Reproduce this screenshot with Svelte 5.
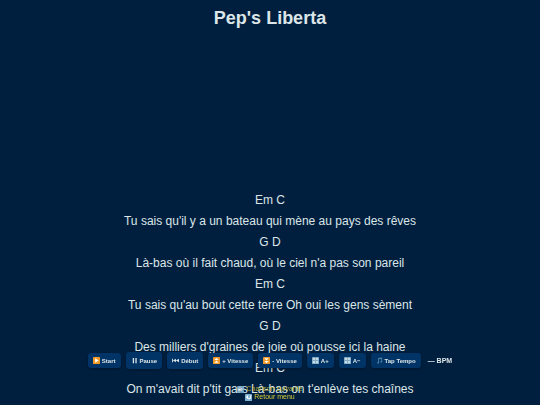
<script>
  const title = "Pep's Liberta";

  const lines = [
    'Em C',
    "Tu sais qu'il y a un bateau qui mène au pays des rêves",
    'G D',
    "Là-bas où il fait chaud, où le ciel n'a pas son pareil",
    'Em C',
    "Tu sais qu'au bout cette terre Oh oui les gens sèment",
    'G D',
    "Des milliers d'graines de joie où pousse ici la haine",
    'Em C',
    "On m'avait dit p'tit gars Là-bas on t'enlève tes chaînes"
  ];

  let bpm = '—';
  let fontSize = 12;
  let speed = 1;
  let playing = false;
  let taps = [];
  let lyrics;

  const controls = [
    { icon: 'play', label: 'Start', action: () => (playing = true) },
    { icon: 'pause', label: 'Pause', tall: true, action: () => (playing = false) },
    { icon: 'rewind', label: 'Début', tall: true, action: () => lyrics.scrollTo(0, 0) },
    { icon: 'up', label: '+ Vitesse', action: () => (speed += 1) },
    { icon: 'down', label: '- Vitesse', action: () => (speed = Math.max(1, speed - 1)) },
    { icon: 'letters', label: 'A+', action: () => (fontSize += 1) },
    { icon: 'letters', label: 'A−', action: () => (fontSize -= 1) },
    { icon: 'note', label: 'Tap Tempo', action: tapTempo }
  ];

  function tapTempo() {
    taps = [...taps, Date.now()].slice(-5);
    if (taps.length > 1) {
      const average = (taps[taps.length - 1] - taps[0]) / (taps.length - 1);
      bpm = Math.round(60000 / average);
    }
  }
</script>

{#snippet icon(name)}
  <svg class="icon" viewBox="0 0 16 16" aria-hidden="true">
    {#if name === 'play'}
      <rect width="16" height="16" rx="2" fill="#f39a26" />
      <path d="M5 3l8 5-8 5z" fill="#fff" />
    {:else if name === 'up'}
      <rect width="16" height="16" rx="2" fill="#f39a26" />
      <path d="M8 2l5 5H3zM8 8l5 5H3z" fill="#fff" />
    {:else if name === 'down'}
      <rect width="16" height="16" rx="2" fill="#f39a26" />
      <path d="M3 3h10L8 8zM3 9h10l-5 5z" fill="#fff" />
    {:else if name === 'pause'}
      <path d="M4 2h3v12H4zM10 2h3v12h-3z" fill="#dce6e8" />
    {:else if name === 'rewind'}
      <path d="M0 4h2v8H0zM9 4v8L2 8zM16 4v8L9 8z" fill="#dce6e8" />
    {:else if name === 'letters'}
      <rect width="16" height="16" rx="1" fill="#7fa9c3" />
      <path d="M2 2h5v5H2zM9 2h5v5H9zM2 9h5v5H2zM9 9h5v5H9z" fill="#c5dae4" />
    {:else if name === 'note'}
      <path d="M5 2l9-1v10a2 2 0 1 1-2-2V4L7 5v8a2 2 0 1 1-2-2z" fill="#4d87aa" />
    {:else if name === 'next'}
      <rect width="16" height="16" rx="1" fill="#7fb2d2" />
      <path d="M2 6h6V3l6 5-6 5v-3H2z" fill="#fff" />
    {:else if name === 'back'}
      <rect width="16" height="16" rx="1" fill="#7fb2d2" />
      <path d="M7 5V2L2 7l5 5V9h3a2 2 0 0 0 2-2V3h2v5a4 4 0 0 1-4 4H8" fill="#fff" />
    {/if}
  </svg>
{/snippet}

<main>
  <h1>{title}</h1>

  <div class="lyrics" bind:this={lyrics} style="font-size: {fontSize}px">
    {#each lines as line}
      <p>{line}</p>
    {/each}
  </div>

  <div class="controls">
    {#each controls as control}
      <button type="button" class:tall={control.tall} on:click={control.action}>
        {@render icon(control.icon)}
        {control.label}
      </button>
    {/each}
    <span class="bpm">{bpm} BPM</span>
  </div>

  <nav>
    <a class="next" href="#suivante">{@render icon('next')} Chanson suivante</a>
    <a href="#menu">{@render icon('back')} Retour menu</a>
  </nav>
</main>

<style>
  :global(body) {
    margin: 0;
    background: #001f3f;
    color: #dce6e8;
    font-family: 'Liberation Sans', Arial, sans-serif;
    overflow: hidden;
  }

  main {
    display: flex;
    flex-direction: column;
    height: 100vh;
    text-align: center;
  }

  h1 {
    margin: 0;
    padding-top: 8px;
    font-size: 18px;
    line-height: 21px;
  }

  .lyrics {
    flex: 1;
    padding-top: 164px;
    overflow: hidden;
  }

  p {
    margin: 0 0 7px;
    line-height: 14px;
  }

  .controls {
    position: fixed;
    right: 0;
    bottom: 36px;
    left: 0;
    display: flex;
    align-items: center;
    justify-content: center;
    gap: 5px;
  }

  button {
    display: flex;
    align-items: center;
    gap: 2px;
    height: 15px;
    padding: 0 5px;
    border: none;
    border-radius: 3px;
    background: #003366;
    box-shadow: 0 1px 3px rgba(0, 0, 0, 0.3);
    color: inherit;
    font: bold 6px 'Liberation Sans', Arial, sans-serif;
    white-space: nowrap;
    cursor: pointer;
  }

  button.tall {
    height: 17px;
  }

  .icon {
    flex: none;
    width: 7px;
    height: 7px;
  }

  .bpm {
    margin-left: 2px;
    font-size: 7px;
    font-weight: bold;
  }

  nav {
    position: fixed;
    right: 0;
    bottom: 4px;
    left: 0;
    display: flex;
    flex-direction: column;
    align-items: center;
  }

  a {
    display: flex;
    align-items: center;
    gap: 2px;
    color: #d9cf3a;
    font-size: 7px;
    line-height: 8px;
    text-decoration: none;
  }

  .next {
    opacity: 0.8;
  }
</style>
